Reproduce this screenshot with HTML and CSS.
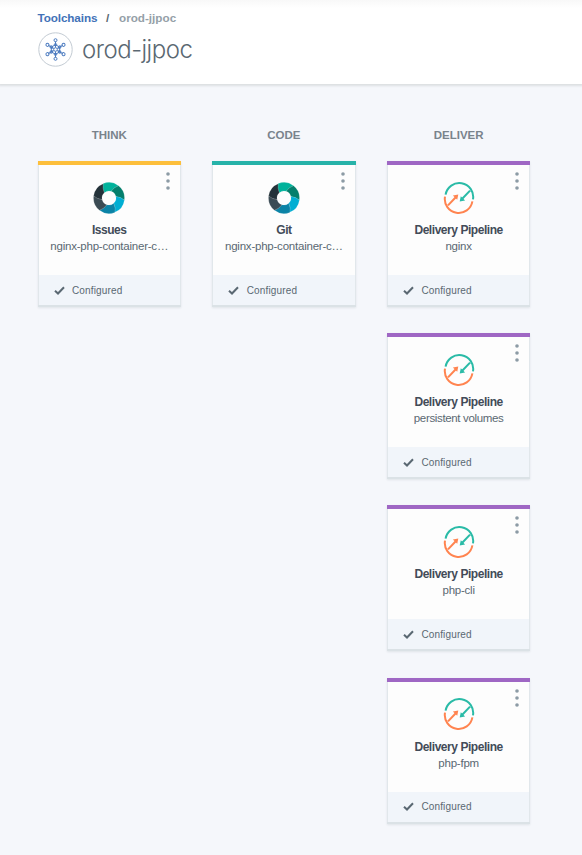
FILE: index.html
```
<!DOCTYPE html>
<html lang="en">
<head>
<meta charset="utf-8">
<title>orod-jjpoc</title>
<link rel="stylesheet" href="styles.css">
</head>
<body>
<svg class="defs" width="0" height="0" aria-hidden="true">
  <defs>
    <path id="blade" d="M-5.8-14.4A15.5 15.5 0 0 1 9.5-12.2Q5-10.5 2.2-6.7A7 7 0 0 0-4.7-5.2Q-7-10-5.8-14.4Z" stroke="#fff" stroke-opacity=".35" stroke-width=".4"/>
    <symbol id="ring" viewBox="-16 -16 32 32">
      <use href="#blade" fill="#00b29b"/>
      <use href="#blade" fill="#047f6c" transform="rotate(60)"/>
      <use href="#blade" fill="#00aed3" transform="rotate(120)"/>
      <use href="#blade" fill="#0b83a6" transform="rotate(180)"/>
      <use href="#blade" fill="#3b4b54" transform="rotate(240)"/>
      <use href="#blade" fill="#24323a" transform="rotate(300)"/>
    </symbol>
    <symbol id="pipeline" viewBox="-16 -16 32 32">
      <g fill="none" stroke="#2abba7" stroke-width="2">
        <path d="M-13.4-3.4A13.9 13.9 0 0 1 14 1.3M11-7.4 3 1"/>
        <path d="M.7 3.6 1.8-1.8 6.1 2.5Z" fill="#2abba7" stroke="none"/>
      </g>
      <g fill="none" stroke="#ff8450" stroke-width="2">
        <path d="M13.4 3.4A13.9 13.9 0 0 1-14-1.3M-11 7.4-3-1"/>
        <path d="M-.7-3.6-1.8 1.8-6.1-2.5Z" fill="#ff8450" stroke="none"/>
      </g>
    </symbol>
    <symbol id="check" viewBox="0 0 11 9">
      <path d="M1 4.7 4 7.5 10 1.2" fill="none" stroke="#5a6872" stroke-width="2"/>
    </symbol>
    <symbol id="dots" viewBox="0 0 4 18">
      <g fill="#8c9ba5"><circle cx="2" cy="2" r="1.8"/><circle cx="2" cy="9" r="1.8"/><circle cx="2" cy="16" r="1.8"/></g>
    </symbol>
    <g id="spoke"><path d="M0-2V-8"/><circle cy="-9.3" r="1.5"/><circle cy="-4.8" r="1.2"/><path d="M0-4.8 4.2-2.4"/></g>
  </defs>
</svg>

<header class="header">
  <nav class="crumbs"><a class="crumb-link">Toolchains</a><span class="slash">/</span><span class="crumb-here">orod-jjpoc</span></nav>
  <div class="title-row">
    <svg class="logo" viewBox="-17.5 -17.5 35 35">
      <circle r="16.7" fill="#fff" stroke="#c3cbd3"/>
      <g fill="none" stroke="#4d7cc0" stroke-width="1">
        <use href="#spoke"/><use href="#spoke" transform="rotate(60)"/><use href="#spoke" transform="rotate(120)"/>
        <use href="#spoke" transform="rotate(180)"/><use href="#spoke" transform="rotate(240)"/><use href="#spoke" transform="rotate(300)"/>
        <circle r="1.8"/>
      </g>
    </svg>
    <h1 class="title">orod-jjpoc</h1>
  </div>
</header>

<main class="board">
  <section class="column think">
    <h2 class="phase">THINK</h2>
    <article class="card">
      <svg class="menu"><use href="#dots"/></svg>
      <div class="body"><svg class="icon"><use href="#ring"/></svg><h3 class="name">Issues</h3><p class="detail">nginx-php-container-c…</p></div>
      <footer class="status"><svg class="check"><use href="#check"/></svg><span class="state">Configured</span></footer>
    </article>
  </section>
  <section class="column code">
    <h2 class="phase">CODE</h2>
    <article class="card">
      <svg class="menu"><use href="#dots"/></svg>
      <div class="body"><svg class="icon"><use href="#ring"/></svg><h3 class="name">Git</h3><p class="detail">nginx-php-container-c…</p></div>
      <footer class="status"><svg class="check"><use href="#check"/></svg><span class="state">Configured</span></footer>
    </article>
  </section>
  <section class="column deliver">
    <h2 class="phase">DELIVER</h2>
    <article class="card">
      <svg class="menu"><use href="#dots"/></svg>
      <div class="body"><svg class="icon"><use href="#pipeline"/></svg><h3 class="name">Delivery Pipeline</h3><p class="detail">nginx</p></div>
      <footer class="status"><svg class="check"><use href="#check"/></svg><span class="state">Configured</span></footer>
    </article>
    <article class="card">
      <svg class="menu"><use href="#dots"/></svg>
      <div class="body"><svg class="icon"><use href="#pipeline"/></svg><h3 class="name">Delivery Pipeline</h3><p class="detail tight">persistent volumes</p></div>
      <footer class="status"><svg class="check"><use href="#check"/></svg><span class="state">Configured</span></footer>
    </article>
    <article class="card">
      <svg class="menu"><use href="#dots"/></svg>
      <div class="body"><svg class="icon"><use href="#pipeline"/></svg><h3 class="name">Delivery Pipeline</h3><p class="detail">php-cli</p></div>
      <footer class="status"><svg class="check"><use href="#check"/></svg><span class="state">Configured</span></footer>
    </article>
    <article class="card">
      <svg class="menu"><use href="#dots"/></svg>
      <div class="body"><svg class="icon"><use href="#pipeline"/></svg><h3 class="name">Delivery Pipeline</h3><p class="detail">php-fpm</p></div>
      <footer class="status"><svg class="check"><use href="#check"/></svg><span class="state">Configured</span></footer>
    </article>
  </section>
</main>
</body>
</html>
```
FILE: styles.css
```
* { box-sizing: border-box; }
html { background: #f5f7fb; }
body { margin: 0; height: 855px; overflow: hidden; font-family: "Liberation Sans", Arial, sans-serif; color: #5a6872; }
h1, h2, h3, p { margin: 0; }
svg { display: block; }
.defs { position: absolute; }

.header { height: 84px; padding: 10px 0 0 37.5px; background: linear-gradient(#f8f8f8, #fff 8px); box-shadow: 0 1px 2px 1px #dcdfe2; }
.crumbs { display: flex; height: 16px; line-height: 16px; font-size: 11.7px; font-weight: bold; letter-spacing: -.1px; }
.crumb-link { width: 60.5px; color: #4272b8; }
.slash { width: 21px; padding-left: 8px; }
.crumb-here { color: #959fa8; letter-spacing: 0; }
.title-row { display: flex; align-items: center; height: 35px; margin-top: 6px; gap: 9.5px; }
.logo { width: 35px; height: 35px; }
.title { font-family: Inter, "Liberation Sans", sans-serif; font-size: 24px; font-weight: 300; letter-spacing: -.5px; line-height: 33px; padding-bottom: 1px; color: #5a6872; }

.board { display: flex; gap: 31.2px; padding: 43px 38px 0 37.5px; }
.column { flex: none; width: 143.5px; }
.phase { height: 34px; line-height: 16px; font-size: 11.5px; text-align: center; color: #79838c; }
.card { position: relative; height: 146px; margin-bottom: 26.2px; border: 1px solid #e1e7eb; border-top: 4px solid; border-bottom: 2px solid #dbe2e6; background: #fdfdfd; border-left-width: 0; border-right-width: 0; box-shadow: inset 1px 0 #e1e7eb, inset -1px 0 #e1e7eb, 0 1px 2px #dfe4e8; }
.think .card { border-top-color: #fdbf3b; }
.code .card { border-top-color: #27b3a9; }
.deliver .card { border-top-color: #9f67c4; }
.menu { position: absolute; top: 7px; right: 11px; width: 4px; height: 18px; }
.body { display: flex; flex-direction: column; align-items: center; height: 110px; padding-top: 16.5px; }
.icon { width: 32px; height: 32px; }
.name { margin-top: 8.5px; line-height: 17px; font-size: 12px; letter-spacing: -.45px; color: #424b58; white-space: nowrap; }
.detail { line-height: 15px; font-size: 11.5px; letter-spacing: -.22px; white-space: nowrap; }
.tight { letter-spacing: -.35px; }
.status { display: flex; align-items: center; height: 30px; margin: 0 1px; padding-left: 15px; background: #f1f5fa; }
.check { width: 11px; height: 9px; }
.state { margin-left: 7.5px; font-size: 10px; letter-spacing: .15px; }
```
